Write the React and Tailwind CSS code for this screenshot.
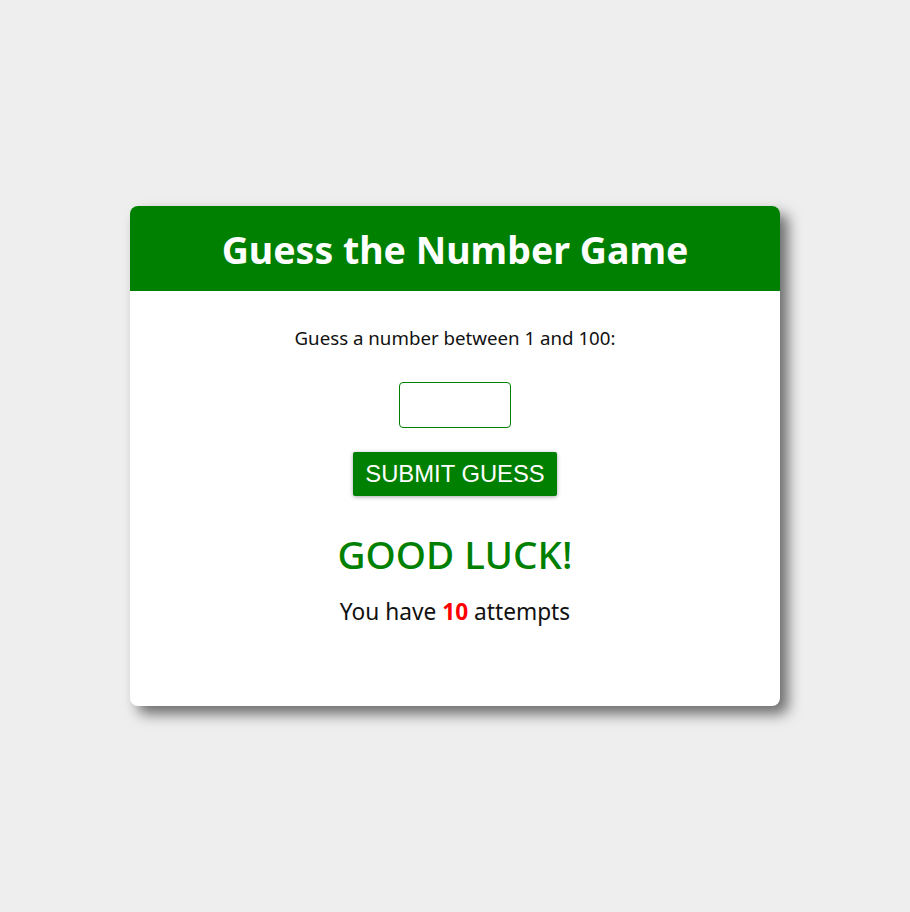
export default function App() {
  const font = { fontFamily: '"Noto Sans", "Open Sans", sans-serif' };
  return (
    <div className="w-[910px] h-[912px] bg-[#eeeeee] flex items-center justify-center" style={font}>
      <div className="w-[650px] h-[500px] bg-white rounded-[8px] shadow-[8px_8px_14px_rgba(0,0,0,0.55)] flex flex-col overflow-hidden">
        <div className="h-[85px] bg-[#008000] flex items-center justify-center">
          <h1 className="text-white text-[37.5px] font-bold leading-none pt-[2px]">Guess the Number Game</h1>
        </div>
        <div className="flex flex-col items-center">
          <p className="mt-[35px] text-[18.7px] leading-[24px] text-[#111]">Guess a number between 1 and 100:</p>
          <input className="mt-[32px] w-[112px] h-[46px] border border-[#008000] rounded-[4px] outline-none" />
          <button className="mt-[24px] w-[204px] h-[44px] bg-[#008000] text-white text-[23.8px] rounded-[2px] shadow-[0_1px_4px_rgba(0,0,0,0.35)]" style={{ fontFamily: '"Liberation Sans", Arial, sans-serif' }}>SUBMIT GUESS</button>
          <h2 className="mt-[36px] text-[#008000] text-[38.6px] font-medium leading-[44px]">GOOD LUCK!</h2>
          <p className="mt-[21px] text-[22.7px] leading-[30px] text-[#111]">You have <span className="text-[#ff0000] font-bold">10</span> attempts</p>
        </div>
      </div>
    </div>
  );
}
